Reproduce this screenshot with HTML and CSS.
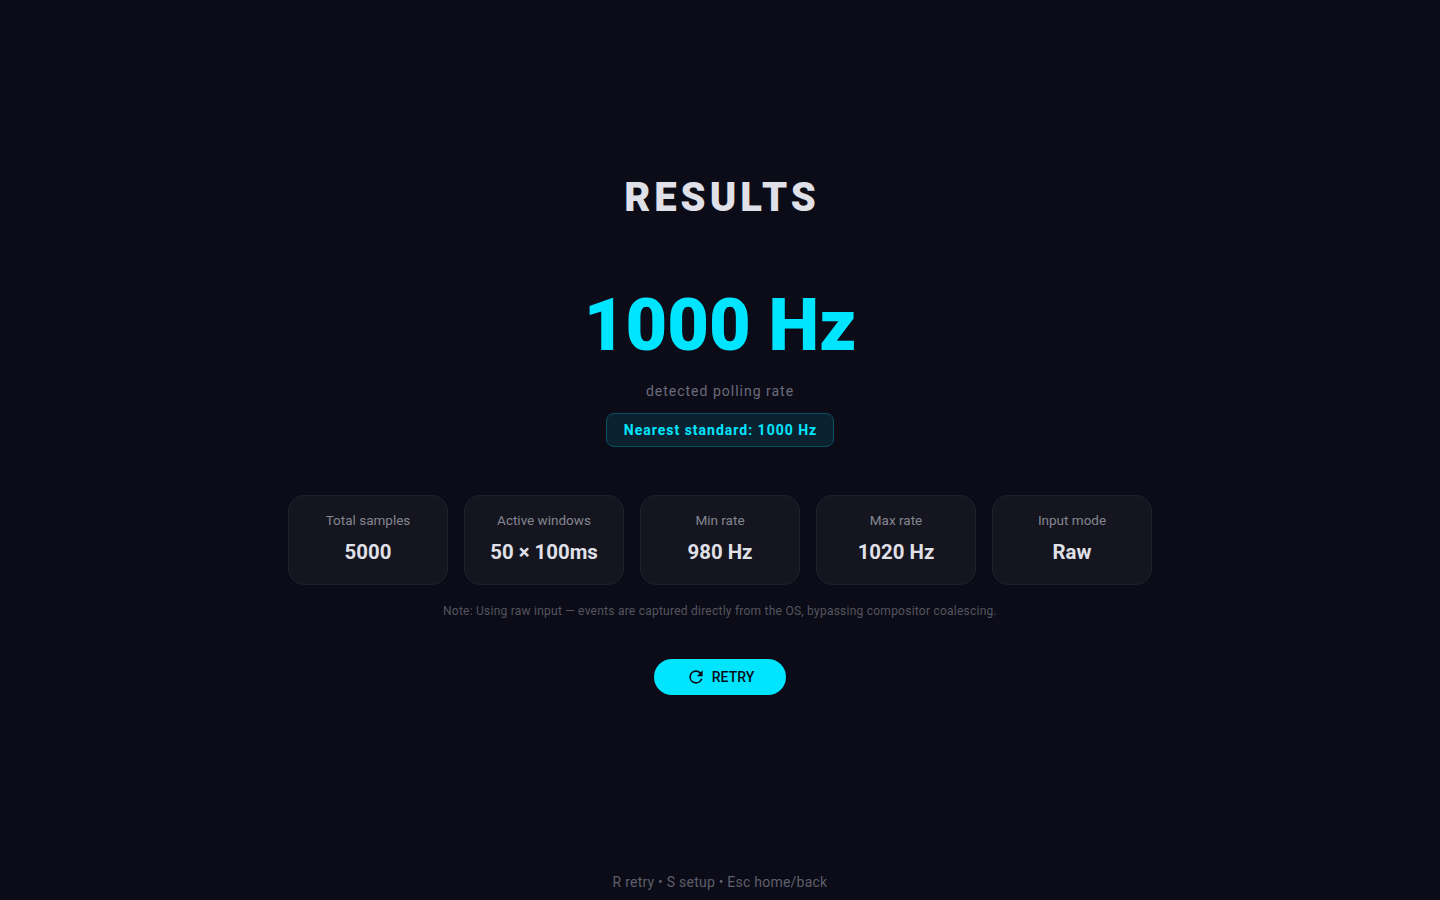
FILE: index.html
```html
<!DOCTYPE html>
<html lang="en">
<head>
  <meta charset="UTF-8">
  <title>Polling Rate - Results</title>
  <link rel="stylesheet" href="styles.css">
</head>
<body>
  <main class="results">
    <h1 class="title">RESULTS</h1>
    <div class="rate">1000 Hz</div>
    <div class="rate-label">detected polling rate</div>
    <div class="badge">Nearest standard: 1000 Hz</div>

    <div class="stats">
      <div class="stat"><div class="stat-label">Total samples</div><div class="stat-value">5000</div></div>
      <div class="stat"><div class="stat-label">Active windows</div><div class="stat-value">50 × 100ms</div></div>
      <div class="stat"><div class="stat-label">Min rate</div><div class="stat-value">980 Hz</div></div>
      <div class="stat"><div class="stat-label">Max rate</div><div class="stat-value">1020 Hz</div></div>
      <div class="stat"><div class="stat-label">Input mode</div><div class="stat-value">Raw</div></div>
    </div>

    <p class="note">Note: Using raw input — events are captured directly from the OS, bypassing compositor coalescing.</p>

    <button class="retry-btn">
      <svg width="20" height="20" viewBox="0 0 24 24" fill="currentColor"><path d="M17.65 6.35A7.96 7.96 0 0 0 12 4a8 8 0 1 0 7.73 10h-2.08A6 6 0 1 1 12 6c1.66 0 3.14.69 4.22 1.78L13 11h7V4l-2.35 2.35z"/></svg>
      RETRY
    </button>
  </main>

  <footer class="hints">R retry • S setup • Esc home/back</footer>
</body>
</html>
```

FILE: styles.css
```css
* {
  box-sizing: border-box;
}

body {
  margin: 0;
  height: 900px;
  overflow: hidden;
  background-color: #0b0c17;
  font-family: Roboto, "Liberation Sans", sans-serif;
  display: flex;
  flex-direction: column;
  align-items: center;
}

.results {
  flex: 1;
  display: flex;
  flex-direction: column;
  align-items: center;
  padding-top: 174px;
}

.title {
  margin: 0;
  padding-left: 4px;
  font-size: 40px;
  line-height: 48px;
  font-weight: 900;
  letter-spacing: 4px;
  color: #e0e0e8;
}

.rate {
  margin-top: 62px;
  font-size: 72px;
  line-height: 84px;
  font-weight: 900;
  color: #00e5ff;
}

.rate-label {
  margin-top: 13px;
  font-size: 14px;
  line-height: 20px;
  letter-spacing: 1px;
  color: #6b6b7b;
}

.badge {
  margin-top: 12px;
  height: 34px;
  padding: 0 16px 0 17px;
  display: flex;
  align-items: center;
  font-size: 14px;
  font-weight: 700;
  letter-spacing: 1px;
  color: #00e5ff;
  background-color: #0a2230;
  border: 1px solid #0b4f60;
  border-radius: 8px;
}

.stats {
  margin-top: 48px;
  display: flex;
  gap: 16px;
}

.stat {
  width: 160px;
  height: 90px;
  padding-top: 15px;
  text-align: center;
  background-color: #14151f;
  border: 1px solid #20212c;
  border-radius: 16px;
}

.stat-label {
  font-size: 13.5px;
  line-height: 18px;
  color: #85858f;
}

.stat-value {
  margin-top: 9px;
  font-size: 20.4px;
  line-height: 28px;
  font-weight: 700;
  color: #e0e0e8;
}

.note {
  margin: 18px 0 0;
  font-size: 12px;
  line-height: 16px;
  letter-spacing: 0.24px;
  color: #55555f;
}

.retry-btn {
  margin-top: 40px;
  width: 132px;
  height: 36px;
  display: flex;
  align-items: center;
  justify-content: center;
  gap: 6px;
  border: none;
  border-radius: 18px;
  background-color: #00e5ff;
  color: #0a0b14;
  font-family: inherit;
  font-size: 14px;
  font-weight: 500;
  cursor: pointer;
}

.hints {
  padding-bottom: 8px;
  font-size: 14px;
  line-height: 20px;
  letter-spacing: 0.23px;
  color: #5f5f6b;
}
```
